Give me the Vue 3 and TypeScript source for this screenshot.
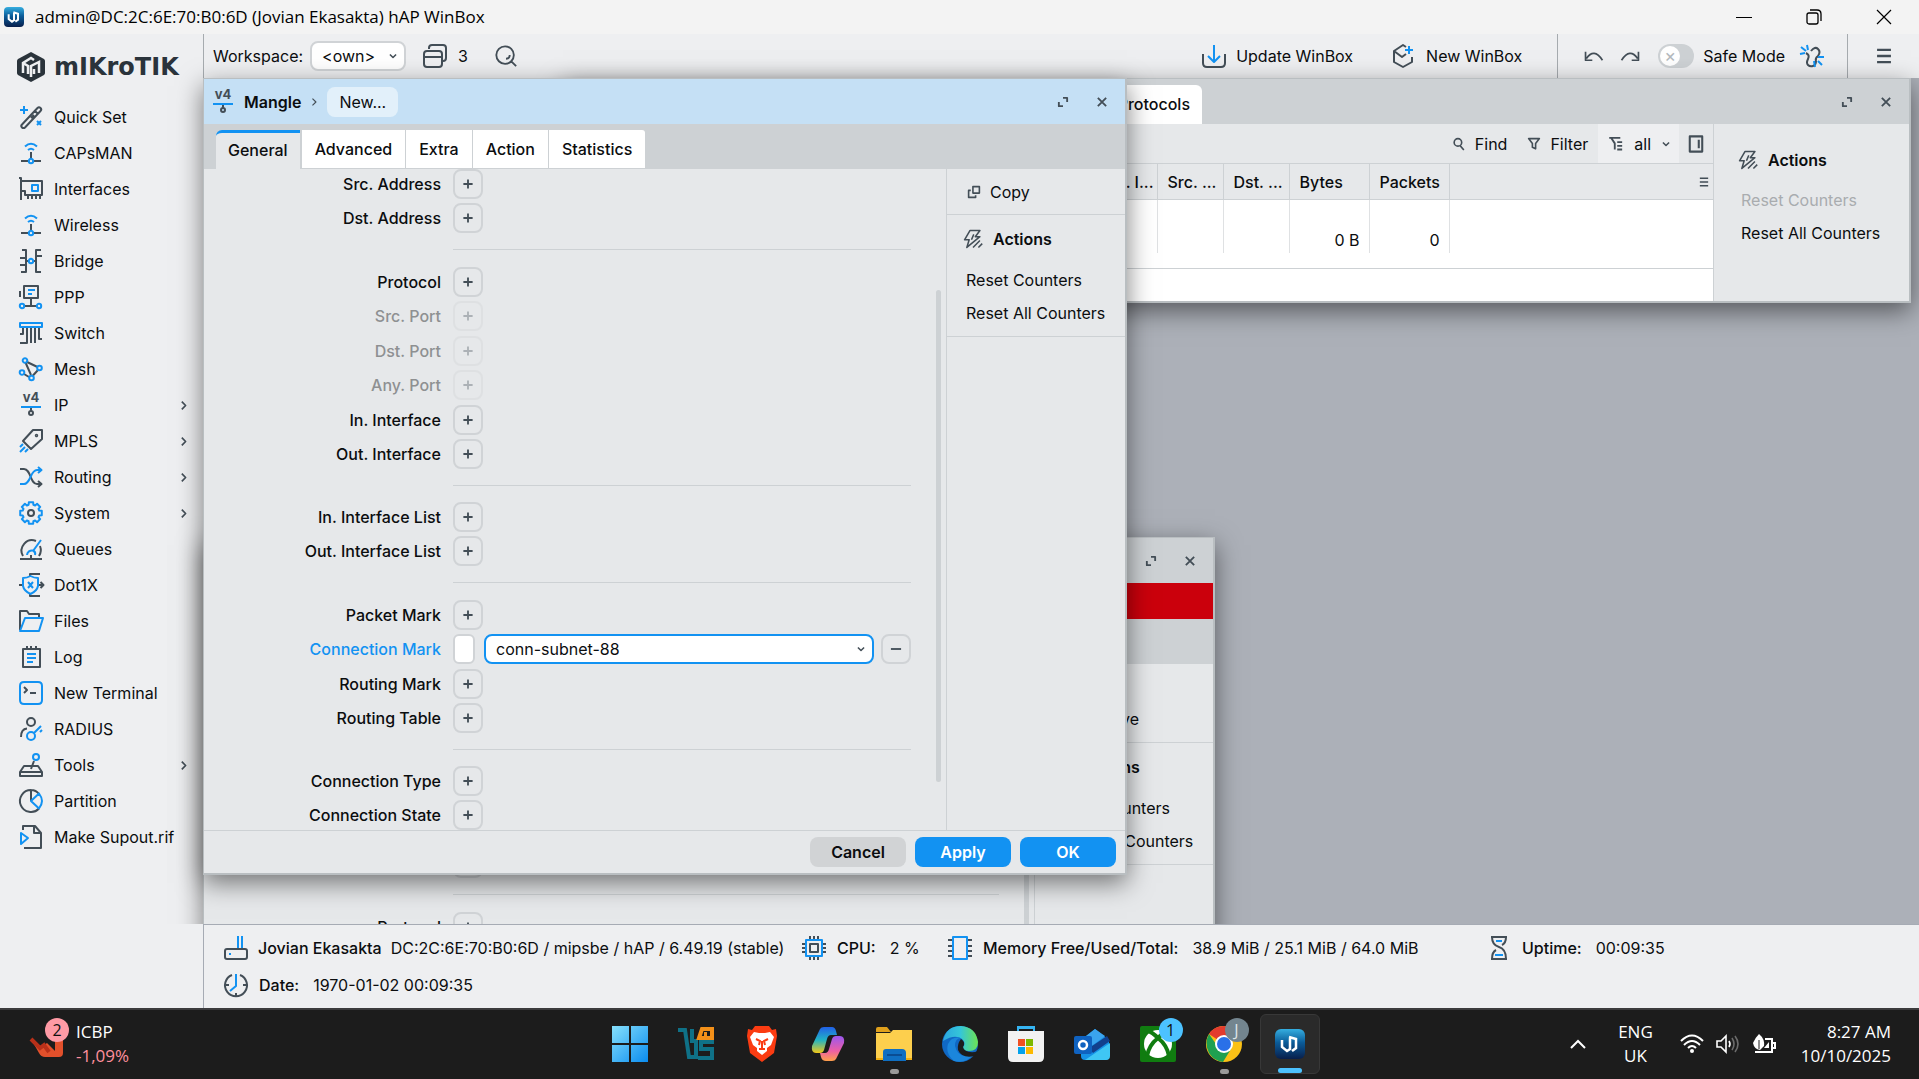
<script setup lang="ts">
import { h, ref } from 'vue'

type Stroke = [tone: 'k' | 'b', d: string]

const circle = (x: number, y: number, r: number): string =>
  `M${x - r} ${y}a${r} ${r} 0 1 0 ${2 * r} 0a${r} ${r} 0 1 0 ${-2 * r} 0`

const gear = (): string => {
  const points: string[] = []
  for (let i = 0; i < 8; i++) {
    const base = (i * Math.PI) / 4
    for (const [offset, radius] of [[-0.28, 8.6], [-0.2, 11], [0.2, 11], [0.28, 8.6]]) {
      const x = 12 + radius * Math.sin(base + offset)
      const y = 12 - radius * Math.cos(base + offset)
      points.push(`${x.toFixed(2)} ${y.toFixed(2)}`)
    }
  }
  return `M${points.join('L')}Z`
}

const strokes: Record<string, Stroke[]> = {
  quick: [
    ['b', 'M5 1v8M1 5h8M4 4l2 2M6 4l-2 2M18 16l4 4M22 16l-4 4'],
    ['k', 'M3 19.500L18.500 3a2 2 0 0 1 3 3L6 22.500a2 2 0 0 1-3-3zM16 6l3 3M15 10l-3 3'],
  ],
  wifi: [
    ['b', 'M6 5.500Q12 0 18 5.500M9 9Q12 6.500 15 9'],
    ['k', 'M12 11v6M2 20h7.500M14.500 20H22'],
    ['b', circle(12, 20, 2.2)],
  ],
  interfaces: [
    ['k', 'M0 1h2v22M2 4h21v14h-2M2 14h4v4h3M9 17v5M13 17v5M17 17v5M21 17v5M9 18h12'],
    ['b', 'M13 8h6v6h-6z'],
  ],
  bridge: [
    ['k', 'M3 1h4v22H2M1 9h6M1 16h6M22 1h-5v22h5M23 7h-6M7 12h2.500M14.500 12H17'],
    ['b', circle(12, 12, 2.2)],
  ],
  ppp: [
    ['k', 'M1 6v6M5 1h14v12H5zM12 13v7M6 21h12'],
    ['b', 'M9 5h7M9 9h4' + circle(3, 21, 2.2) + circle(20, 21, 2.2)],
  ],
  switch: [
    ['b', 'M1 2h22v4H1z'],
    ['k', 'M4 7v6H1M8 7v15H1M12 7v15M16 7v15M20 7v11h3'],
  ],
  mesh: [
    ['k', 'M7 4.500L18.500 10M19 13l-5.500 6M12 18L6.500 5.500M5 17l5 3'],
    ['b', circle(6, 3.5, 2.3) + circle(20.5, 11, 2.3) + circle(3, 15.5, 2.3) + circle(12.5, 21, 2.3)],
  ],
  ip: [
    ['b', 'M2 14h20'],
    ['k', 'M12 15v3' + circle(12, 20, 2)],
  ],
  mpls: [
    ['k', 'M4 12L14 1h9v9L12 20z' + circle(17.5, 6.5, 0.7)],
    ['b', 'M4 15l-3 3M6 18l-5 5M9 20l-3 3'],
  ],
  routing: [
    ['k', 'M1 4h4c7 0 6 15 13 15h4M19 16l3.500 3-3.500 3'],
    ['b', 'M1 19h4c7 0 6-14 13-14h4M19 2l3.500 3L19 8'],
  ],
  system: [['b', gear()], ['k', circle(12, 12, 3)]],
  queues: [
    ['k', 'M4 19A10.500 10.500 0 0 1 17 4M21 9a11 11 0 0 1-1 10M1 22h22M12 18v4'],
    ['b', 'M22 3l-8 11M8 18a5 5 0 0 1 6-4.500Q17 15 16 18'],
  ],
  dot1x: [
    ['k', 'M11 3V1h10M11 21v2h10M0 12h4M20 12h4M21.500 9l3 3-3 3'],
    ['b', 'M4 5Q8 5 11.500 3Q15 5 19 5v8q-1 5-7.500 8Q5 18 4 13zM9 9l5 6M14 9l-5 6'],
  ],
  files: [
    ['k', 'M1 21V2h7l2 3h10v4'],
    ['b', 'M1 22L6 9h18l-4 13z'],
  ],
  log: [
    ['k', 'M4 4h17v18H4zM8 1v4M12 1v4M17 1v4'],
    ['b', 'M8 9h9M8 13h9M8 17h6'],
  ],
  terminal: [
    ['b', 'M5 1h14q4 0 4 4v14q0 4-4 4H5q-4 0-4-4V5q0-4 4-4z'],
    ['k', 'M5 6l3 3-3 3M11 12h6'],
  ],
  radius: [
    ['k', circle(12, 5, 4) + 'M2 20q0-8 6-8.500'],
    ['b', circle(12, 19, 4) + 'M15 16l7-7M21 15l2-2'],
  ],
  tools: [
    ['k', 'M1 19L5 13h14l4 6v4H1zM1 19h22M12 16l3-8'],
    ['b', circle(17, 4, 3)],
  ],
  partition: [
    ['k', 'M20 19.500A11 11 0 1 1 12 1v11M12 1q5 0 8 4'],
    ['b', 'M20 4.500q3 4 3 7.500t-3 7.500L12 12zM12 12l8-7.500'],
  ],
  supout: [
    ['k', 'M4 5V1h12l6 7v15H5M15 1v7h7'],
    ['b', 'M2 8l7 5-7 6z'],
  ],
  windows: [
    ['k', 'M6 5V4q0-3 3-3h11q3 0 3 3v10q0 3-3 3h-1M4 7h12q3 0 3 3v10q0 3-3 3H4q-3 0-3-3V10q0-3 3-3zM1 13h18'],
  ],
  search: [['k', circle(11, 11, 9.5) + 'M18 18l5 5M16 11q0 4-4 4']],
  update: [
    ['k', 'M1 10v9q0 4 4 4h14q4 0 4-4v-9'],
    ['b', 'M12 1v17M6 12l6 6 6-6'],
  ],
  newbox: [
    ['k', 'M14 3l-3-2-9 6v11l9 5 9-5v-5M2 7l8 6 4-3'],
    ['b', 'M17 2v8M13 6h8M16 5l2 2M18 5l-2 2'],
  ],
  undo: [['k', 'M2 7v10h8M3 15Q12 2 22 17']],
  redo: [['k', 'M22 7v10h-8M21 15Q12 2 2 17']],
  unlink: [
    ['k', 'M11 7q4-5 7-2t0 7q-3 2-2 5M6 9q4 2 2 6-2 4 0 6t5 1q3-1 3-5'],
    ['b', 'M7 1l1 5M1 3l5 4M0 10l5-1M14 17l1 6M18 17l4 4M18 13h6'],
  ],
  menu: [['k', 'M3 4h18M3 12h18M3 20h18']],
  expand: [['k', 'M12 3h9v9M12 21H3v-9']],
  close: [['k', 'M3 3l18 18M21 3L3 21']],
  copy: [['k', 'M10 2h12v12H10zM6 9H2v13h13v-4']],
  actions: [['k', 'M8 1h13l-6 8h6L4 23l3-10H1zM21 14l-9 9M24 18l-5 5M13 6l-3 7']],
  find: [['k', circle(10, 9, 7) + 'M14 15l7 8']],
  filter: [['k', 'M2 2h20l-7 9v10l-6-3v-7z']],
  tree: [['k', 'M1 2h18M4 2l6 9v10M14 9h8M14 15h8M14 21h8']],
  panel: [['k', 'M3 1h18v22H3zM16 6v12']],
  down: [['k', 'M4 8l8 8 8-8']],
  right: [['k', 'M8 3l9 9-9 9']],
  plus: [['k', 'M12 2v20M2 12h20']],
  minus: [['k', 'M1 12h22']],
  router: [
    ['k', 'M3 13h18q2 0 2 2v6q0 2-2 2H3q-2 0-2-2v-6q0-2 2-2z'],
    ['b', 'M14 0v12M18 0v12M6 17v2'],
  ],
  cpu: [
    ['k', 'M8 0v3M12 0v3M16 0v3M8 21v3M12 21v3M16 21v3M0 8h3M0 12h3M0 16h3M21 8h3M21 12h3M21 16h3M8 8h8v8H8z'],
    ['b', 'M4 4h16v16H4z'],
  ],
  memory: [
    ['k', 'M0 4h5M0 10h5M0 15h5M0 20h5M19 4h5M19 10h5M19 15h5M19 20h5'],
    ['b', 'M5 1h14v22H5z'],
  ],
  hourglass: [
    ['k', 'M4 1h16M4 23h16M5 1q0 8 7 10t7 12M19 1q0 6-4 8M5 23q0-7 4-9'],
    ['b', 'M9 5h6M8 19h8'],
  ],
  clock: [
    ['k', 'M8 2A11 11 0 1 0 16 2M12 20v3M2 12h3M19 12h3'],
    ['b', 'M12 1v12l-6 5'],
  ],
}

const Icon = (props: { name: string; size?: number; weight?: number }) => {
  const size = props.size ?? 24
  const children: any[] = (strokes[props.name] ?? []).map(([tone, d]) =>
    h('path', { d, stroke: tone === 'b' ? '#1292f2' : '#434e57' }),
  )
  if (props.name === 'ip') {
    children.push(
      h('text', { x: 12, y: 9, 'text-anchor': 'middle', 'font-size': 13, 'font-weight': 700, fill: '#434e57', 'font-family': 'Inter, sans-serif' }, 'v4'),
    )
  }
  return h(
    'svg',
    { width: size, height: size, viewBox: '-1 -1 26 26', overflow: 'visible', fill: 'none', 'stroke-width': props.weight ?? 2, 'stroke-linejoin': 'round', 'aria-hidden': 'true' },
    children,
  )
}
Icon.props = ['name', 'size', 'weight']

const menu: { label: string; icon: string; more?: boolean }[] = [
  { label: 'Quick Set', icon: 'quick' },
  { label: 'CAPsMAN', icon: 'wifi' },
  { label: 'Interfaces', icon: 'interfaces' },
  { label: 'Wireless', icon: 'wifi' },
  { label: 'Bridge', icon: 'bridge' },
  { label: 'PPP', icon: 'ppp' },
  { label: 'Switch', icon: 'switch' },
  { label: 'Mesh', icon: 'mesh' },
  { label: 'IP', icon: 'ip', more: true },
  { label: 'MPLS', icon: 'mpls', more: true },
  { label: 'Routing', icon: 'routing', more: true },
  { label: 'System', icon: 'system', more: true },
  { label: 'Queues', icon: 'queues' },
  { label: 'Dot1X', icon: 'dot1x' },
  { label: 'Files', icon: 'files' },
  { label: 'Log', icon: 'log' },
  { label: 'New Terminal', icon: 'terminal' },
  { label: 'RADIUS', icon: 'radius' },
  { label: 'Tools', icon: 'tools', more: true },
  { label: 'Partition', icon: 'partition' },
  { label: 'Make Supout.rif', icon: 'supout' },
]

interface Field { label: string; off?: boolean; edit?: boolean }

const groups: Field[][] = [
  [{ label: 'Src. Address' }, { label: 'Dst. Address' }],
  [
    { label: 'Protocol' },
    { label: 'Src. Port', off: true },
    { label: 'Dst. Port', off: true },
    { label: 'Any. Port', off: true },
    { label: 'In. Interface' },
    { label: 'Out. Interface' },
  ],
  [{ label: 'In. Interface List' }, { label: 'Out. Interface List' }],
  [{ label: 'Packet Mark' }, { label: 'Connection Mark', edit: true }, { label: 'Routing Mark' }, { label: 'Routing Table' }],
  [{ label: 'Connection Type' }, { label: 'Connection State' }],
]
const rearGroups: Field[][] = [[{ label: 'Dst. Address' }], [{ label: 'Protocol' }]]

const tabs = ['General', 'Advanced', 'Extra', 'Action', 'Statistics']
const activeTab = ref('General')
const connectionMark = ref('conn-subnet-88')
const invert = ref(false)
const safeMode = ref(false)
const fieldId = (label: string) => label.toLowerCase().replace(/[^a-z]+/g, '-')
</script>

<template>
  <div class="screen">
    <header class="titlebar">
      <svg width="20" height="20" viewBox="0 0 30 30" aria-hidden="true">
        <defs>
          <linearGradient id="wb" x1="0" y1="0" x2="0" y2="1"><stop offset="0" stop-color="#35aee0" /><stop offset=".45" stop-color="#0b5c99" /><stop offset="1" stop-color="#081f4c" /></linearGradient>
        </defs>
        <rect width="30" height="30" rx="6" fill="url(#wb)" />
        <path d="M7 11v7l5 4 3-2V9M14 8l7 2v9l-4 3" fill="none" stroke="#fff" stroke-width="3" />
      </svg>
      <h1>admin@DC:2C:6E:70:B0:6D (Jovian Ekasakta) hAP WinBox</h1>
      <div class="syskeys">
        <button aria-label="Minimize"><svg width="16" height="16" viewBox="0 0 16 16"><path d="M0 8.500h16" stroke="#000" /></svg></button>
        <button aria-label="Restore"><svg width="16" height="16" viewBox="0 0 16 16" fill="none" stroke="#000" stroke-width="1.300"><rect x="1" y="4" width="11" height="11" rx="2" /><path d="M4 1h7q4 0 4 4v7" /></svg></button>
        <button aria-label="Close"><svg width="16" height="16" viewBox="0 0 16 16" stroke="#000" stroke-width="1.200"><path d="M1 1l14 14M15 1L1 15" /></svg></button>
      </div>
    </header>

    <div class="main">
      <nav class="sidebar">
        <div class="brand">
          <svg width="28" height="30" viewBox="0 0 28 30" aria-hidden="true">
            <path d="M14 0l13 7q1 1 1 2v12q0 1-1 2L14 30 1 23q-1-1-1-2V9q0-1 1-2z" fill="#2a333b" />
            <path d="M6 21V11l8-5 3 2M6 11l5 3v8M14 25V14l8-4v11M17 22v-5" fill="none" stroke="#eeeff1" stroke-width="2.500" />
          </svg>
          <span>mIKroTIK</span>
        </div>
        <a v-for="item in menu" :key="item.label" href="#" class="item">
          <Icon :name="item.icon" :size="26" />
          <span>{{ item.label }}</span>
          <Icon v-if="item.more" name="right" :size="11" :weight="4" class="more" />
        </a>
      </nav>

      <div class="work">
        <div class="toolbar">
          <label for="workspace">Workspace:</label>
          <div class="pick small">
            <select id="workspace"><option>&lt;own&gt;</option></select>
            <Icon name="down" :size="10" :weight="4" />
          </div>
          <button class="count"><Icon name="windows" :size="26" /><span>3</span></button>
          <button aria-label="Search"><Icon name="search" :size="24" /></button>
          <div class="tools">
            <button class="tool"><Icon name="update" :size="26" /><span>Update WinBox</span></button>
            <button class="tool second"><Icon name="newbox" :size="26" /><span>New WinBox</span></button>
            <div class="cluster">
              <button aria-label="Undo"><Icon name="undo" :size="22" /></button>
              <button aria-label="Redo"><Icon name="redo" :size="22" /></button>
              <label class="safe"><input v-model="safeMode" type="checkbox"><span class="track"><i>×</i></span>Safe Mode</label>
              <button aria-label="Disconnect"><Icon name="unlink" :size="26" /></button>
            </div>
            <button class="burger" aria-label="Menu"><Icon name="menu" :size="20" :weight="3" /></button>
          </div>
        </div>

        <div class="desktop">
          <section class="window firewall">
            <div class="bar gray">
              <span class="doc-tab">Layer7 Protocols</span>
              <button aria-label="Maximize" class="key"><Icon name="expand" :size="12" :weight="4" /></button>
              <button aria-label="Close" class="key"><Icon name="close" :size="12" :weight="4" /></button>
            </div>
            <div class="panes">
              <div class="listing">
                <div class="listbar">
                  <button><Icon name="find" :size="14" :weight="3" />Find</button>
                  <button><Icon name="filter" :size="14" :weight="3" />Filter</button>
                  <button class="lit"><Icon name="tree" :size="16" :weight="3" />all<Icon name="down" :size="10" :weight="4" /></button>
                  <button aria-label="Toggle panel"><Icon name="panel" :size="18" :weight="3" /></button>
                </div>
                <table>
                  <colgroup><col class="c-out"><col class="c-src"><col class="c-dst"><col class="c-bytes"><col class="c-packets"><col></colgroup>
                  <thead><tr><th class="end">Out. I...</th><th>Src. ...</th><th>Dst. ...</th><th>Bytes</th><th>Packets</th><th class="end"><Icon name="menu" :size="12" :weight="3" /></th></tr></thead>
                  <tbody><tr><td></td><td></td><td></td><td>0 B</td><td>0</td><td></td></tr></tbody>
                </table>
                <div class="foot"></div>
              </div>
              <aside class="side wide">
                <h2><Icon name="actions" :size="20" />Actions</h2>
                <button disabled>Reset Counters</button>
                <button>Reset All Counters</button>
              </aside>
            </div>
          </section>

          <section class="window rear">
            <div class="bar gray">
              <button aria-label="Maximize" class="key push"><Icon name="expand" :size="12" :weight="4" /></button>
              <button aria-label="Close" class="key"><Icon name="close" :size="12" :weight="4" /></button>
            </div>
            <div class="alert"></div>
            <div class="tabs"></div>
            <div class="panes">
              <div class="form offset">
                <div v-for="(group, g) in rearGroups" :key="g" class="group">
                  <div v-for="field in group" :key="field.label" class="row">
                    <label :for="'rear-' + fieldId(field.label)">{{ field.label }}</label>
                    <button :id="'rear-' + fieldId(field.label)" class="square"><Icon name="plus" :size="12" :weight="4" /></button>
                  </div>
                </div>
                <i class="thumb rear-thumb"></i>
              </div>
              <aside class="side">
                <button class="line remove">Remove</button>
                <div class="block">
                  <h2><Icon name="actions" :size="20" />Actions</h2>
                  <button>Reset Counters</button>
                  <button>Reset All Counters</button>
                </div>
              </aside>
            </div>
          </section>

          <section class="window front">
            <div class="bar blue">
              <Icon name="ip" :size="26" />
              <strong>Mangle</strong>
              <Icon name="right" :size="10" :weight="3" />
              <span class="crumb">New...</span>
              <button aria-label="Maximize" class="key push"><Icon name="expand" :size="12" :weight="4" /></button>
              <button aria-label="Close" class="key"><Icon name="close" :size="12" :weight="4" /></button>
            </div>
            <div class="tabs">
              <button v-for="tab in tabs" :key="tab" :class="{ on: tab === activeTab }" @click="activeTab = tab">{{ tab }}</button>
            </div>
            <div class="panes">
              <div class="form">
                <div v-for="(group, g) in groups" :key="g" class="group">
                  <div v-for="field in group" :key="field.label" class="row" :class="{ off: field.off, edit: field.edit }">
                    <label :for="fieldId(field.label)">{{ field.label }}</label>
                    <template v-if="field.edit">
                      <input v-model="invert" type="checkbox" aria-label="Invert match">
                      <div class="pick">
                        <select :id="fieldId(field.label)" v-model="connectionMark"><option>conn-subnet-88</option></select>
                        <Icon name="down" :size="10" :weight="4" />
                      </div>
                      <button class="square" aria-label="Clear"><Icon name="minus" :size="12" :weight="4" /></button>
                    </template>
                    <button v-else :id="fieldId(field.label)" class="square" :disabled="field.off"><Icon name="plus" :size="12" :weight="4" /></button>
                  </div>
                </div>
                <i class="thumb"></i>
              </div>
              <aside class="side">
                <button class="line"><Icon name="copy" :size="14" :weight="3" />Copy</button>
                <div class="block">
                  <h2><Icon name="actions" :size="20" />Actions</h2>
                  <button>Reset Counters</button>
                  <button>Reset All Counters</button>
                </div>
              </aside>
            </div>
            <footer>
              <button>Cancel</button>
              <button class="go">Apply</button>
              <button class="go">OK</button>
            </footer>
          </section>
        </div>

        <div class="status">
          <div class="stats">
            <p class="s-name"><Icon name="router" :size="26" /><b>Jovian Ekasakta</b><span>DC:2C:6E:70:B0:6D / mipsbe / hAP / 6.49.19 (stable)</span></p>
            <p class="s-cpu"><Icon name="cpu" :size="26" /><b>CPU:</b><span>2 %</span></p>
            <p class="s-mem"><Icon name="memory" :size="26" /><b>Memory Free/Used/Total:</b><span>38.9 MiB / 25.1 MiB / 64.0 MiB</span></p>
            <p class="s-up"><Icon name="hourglass" :size="26" /><b>Uptime:</b><span>00:09:35</span></p>
          </div>
          <div class="stats"><p class="s-date"><Icon name="clock" :size="26" /><b>Date:</b><span>1970-01-02 00:09:35</span></p></div>
        </div>
      </div>
    </div>

    <footer class="taskbar">
      <a href="#" class="widget">
        <span class="stock">
          <svg width="38" height="30" viewBox="0 0 38 30" aria-hidden="true"><path d="M2 10l9 9 7-5 8 8V12l8-6v18q0 4-4 4H16q-4 0-6-4z" fill="#e2502b" /><path d="M2 10l9 9 4-3 5 7" fill="none" stroke="#b93019" stroke-width="4" /></svg>
          <b class="badge pink">2</b>
        </span>
        <span class="quote"><span>ICBP</span><em>-1,09%</em></span>
      </a>

      <div class="apps">
        <button aria-label="Start">
          <svg width="36" height="36" viewBox="0 0 36 36"><defs><linearGradient id="win" x1="0" y1="0" x2="1" y2="1"><stop offset="0" stop-color="#86e0fb" /><stop offset="1" stop-color="#0a8cf0" /></linearGradient></defs><path d="M0 0h17v17H0zM19 0h17v17H19zM0 19h17v17H0zM19 19h17v17H19z" fill="url(#win)" /></svg>
        </button>
        <button aria-label="Virtual machines">
          <svg width="36" height="36" viewBox="0 0 36 36" fill="none" stroke="#0f7187" stroke-width="4"><path d="M0 4h7l4 27h7V15h-4V3" /><path d="M36 16H23v7h11v9H20" /><path d="M21 12l3-9h10v9zM26 8h3" stroke="#f39019" /></svg>
        </button>
        <button aria-label="Brave">
          <svg width="30" height="36" viewBox="0 0 30 36"><path d="M8 0h14l3 4 4-1 1 7-3 17-12 9-12-9L0 10l1-7 4 1z" fill="#fb3c12" /><path d="M7 6l5 1h6l5-1 4 5-3 8-4 3v3l-5 4-5-4v-3l-4-3-3-8z" fill="#fff" /><path d="M9 13l4 2-1 4M21 13l-4 2 1 4M12 23h6M15 15v8" stroke="#fb3c12" stroke-width="2" fill="none" /></svg>
        </button>
        <button aria-label="Copilot">
          <svg width="34" height="34" viewBox="0 0 34 34"><defs><linearGradient id="cp1" x1="0" y1="0" x2="0" y2="1"><stop offset="0" stop-color="#2160e8" /><stop offset=".5" stop-color="#22b4c4" /><stop offset="1" stop-color="#f2c818" /></linearGradient><linearGradient id="cp2" x1="0" y1="0" x2="0" y2="1"><stop offset="0" stop-color="#9a57f0" /><stop offset=".6" stop-color="#ee5fa4" /><stop offset="1" stop-color="#ffa04a" /></linearGradient></defs><path d="M9 2q1-2 4-2h8q3 0 4 4l1 4h-6q-3 0-4 4l-3 11q-1 3-4 3H5q-5 0-4-7z" fill="url(#cp1)" /><path d="M25 32q-1 2-4 2h-6q-4 0-5-4l-1-4h5q3 0 4-4l3-10q1-3 4-3h4q5 0 4 7z" fill="url(#cp2)" /></svg>
        </button>
        <button aria-label="File Explorer" class="run">
          <svg width="36" height="34" viewBox="0 0 36 34"><path d="M0 2q0-2 2-2h9l4 5H0z" fill="#e0a01c" /><path d="M0 6h14l3-3h19v30H0z" fill="#fdcf4d" /><path d="M0 31h36v2H0z" fill="#f2b010" /><path d="M7 34V25q0-3 3-3h16q4 0 4 4v8z" fill="#0f6fc2" /><path d="M11 28h15" stroke="#0a4d93" stroke-width="2" /></svg>
        </button>
        <button aria-label="Edge">
          <svg width="36" height="36" viewBox="0 0 36 36"><defs><linearGradient id="ed" x1="0" y1="0" x2="1" y2="0"><stop offset="0" stop-color="#2aa6e0" /><stop offset=".5" stop-color="#35c6d8" /><stop offset="1" stop-color="#6de352" /></linearGradient></defs><circle cx="18" cy="18" r="18" fill="#1068c4" /><path d="M1 15Q4 0 19 0q15 1 17 16 0 9-9 9-6 0-6-4 3-3 0-7-7-7-20 1z" fill="url(#ed)" /><path d="M13 20q0-8 6-8-9-2-13 6-3 9 6 17 12 3 20-7-16 6-19-8z" fill="#1b86dc" /><path d="M19 13q5 3 2 8 1 6 12 5l3-1-3 5q-13 3-17-6-1-6 3-11z" fill="#1c1c1c" /></svg>
        </button>
        <button aria-label="Store">
          <svg width="36" height="36" viewBox="0 0 36 36"><path d="M10 7V1h16v6" fill="none" stroke="#35b4f2" stroke-width="2" /><path d="M0 5h36v26q0 5-5 5H5q-5 0-5-5z" fill="#f2f2f2" /><path d="M10 5V2h16v3" fill="none" stroke="#35b4f2" stroke-width="2" /><path d="M10 13h7v7h-7z" fill="#f05023" /><path d="M18 13h7v7h-7z" fill="#7db900" /><path d="M10 21h7v7h-7z" fill="#02a2ec" /><path d="M18 21h7v7h-7z" fill="#fcb900" /></svg>
        </button>
        <button aria-label="Outlook">
          <svg width="36" height="32" viewBox="0 0 36 32"><path d="M7 12L21 1l14 11v16q0 4-4 4H11q-4 0-4-4z" fill="#1591e6" /><path d="M7 12L21 1l10 7-16 12z" fill="#3aa4ee" /><path d="M15 20L33 8l3 5-17 12z" fill="#123f8c" /><path d="M11 32l25-17v13q0 4-4 4z" fill="#3fc6f4" /><rect y="8" width="18" height="18" rx="2" fill="#0f62c0" /><circle cx="9" cy="17" r="4" fill="none" stroke="#fff" stroke-width="2.500" /></svg>
        </button>
        <button aria-label="Xbox">
          <svg width="36" height="36" viewBox="0 0 36 36"><rect width="36" height="36" rx="2" fill="#107c10" /><circle cx="18" cy="18" r="14" fill="#fff" /><path d="M8 5q4 1 10 7 6-6 10-7M18 12Q9 19 7 30M18 12q9 7 11 18" stroke="#107c10" stroke-width="4" fill="none" /></svg>
          <b class="badge sky">1</b>
        </button>
        <button aria-label="Chrome" class="run">
          <svg width="36" height="36" viewBox="0 0 36 36"><circle cx="18" cy="18" r="18" fill="#fbc116" /><path d="M18 18L3 8Q8 0 18 0q12 0 16 10H18z" fill="#e33b2e" /><path d="M18 18l-6 3L3 8q-5 9 0 19 5 8 14 9l8-13z" fill="#1fa050" /><circle cx="18" cy="18" r="9" fill="#fff" /><circle cx="18" cy="18" r="7" fill="#2a70e8" /></svg>
          <b class="badge slate">J</b>
        </button>
        <button aria-label="WinBox" class="live">
          <svg width="30" height="30" viewBox="0 0 30 30"><rect width="30" height="30" rx="6" fill="url(#wb)" /><path d="M7 11v7l5 4 3-2V9M14 8l7 2v9l-4 3" fill="none" stroke="#fff" stroke-width="2.500" /></svg>
        </button>
      </div>

      <div class="tray">
        <button aria-label="Show hidden icons"><svg width="16" height="10" viewBox="0 0 16 10" fill="none" stroke="#fff" stroke-width="2"><path d="M1 9l7-7 7 7" /></svg></button>
        <span class="lang">ENG<br>UK</span>
        <span class="signals">
          <svg width="24" height="20" viewBox="0 0 24 20" fill="none" stroke="#fff" stroke-width="2"><path d="M1 7q11-11 22 0M4 11q8-8 16 0M8 14q4-4 8 0" /><circle cx="12" cy="17" r="2" fill="#fff" stroke="none" /></svg>
          <svg width="24" height="20" viewBox="0 0 24 20" fill="none" stroke="#fff" stroke-width="1.600"><path d="M1 7h4l5-5v16l-5-5H1zM13 7q2 3 0 6" /><path d="M16 4q4 6 0 12M19 2q6 8 0 16" stroke="#6c6c6c" /></svg>
          <svg width="24" height="20" viewBox="0 0 24 20" fill="none" stroke="#fff" stroke-width="2"><path d="M13 5h7v13H3M21 9h2v5h-2" /><path d="M7 0q6 5 5 12l-4 4q-6-1-7-7 2-5 6-9z" fill="#fff" stroke="none" /><path d="M12 14l5-6v6z" fill="#fff" stroke="none" /><path d="M7 6v9" stroke="#1c1c1c" stroke-width="1" /></svg>
        </span>
        <span class="time">8:27 AM<br>10/10/2025</span>
      </div>
    </footer>
  </div>
</template>

<style>
body { margin: 0; }
</style>

<style scoped>
.screen { display: flex; flex-direction: column; height: 100vh; overflow: hidden; font: 400 16px/20px Inter, "Liberation Sans", sans-serif; color: #0b0d0f; background: #eeeff1; }
.screen * { box-sizing: border-box; }
button { display: flex; align-items: center; padding: 0; border: 0; background: none; font: inherit; color: inherit; }
svg { flex: none; display: block; }
h1, h2, p { margin: 0; font: inherit; }
select { appearance: none; font: inherit; color: inherit; }
input { margin: 0; }

.titlebar { display: flex; align-items: center; gap: 11px; height: 34px; flex: none; padding-left: 4px; background: #f3f3f3; color: #000; font-family: "Open Sans", "Noto Sans", sans-serif; }
.titlebar h1 { font-size: 17px; }
.syskeys { display: flex; margin-left: auto; }
.syskeys button { width: 70px; height: 34px; justify-content: center; }

.main { display: flex; flex: 1; min-height: 0; }
.sidebar { width: 203px; flex: none; display: flex; flex-direction: column; background: #eeeff1; }
.brand { display: flex; align-items: center; gap: 9px; height: 65px; flex: none; padding-left: 17px; font: 700 24px/30px "DejaVu Sans", sans-serif; color: #2a333b; }
.item { display: flex; align-items: center; gap: 10px; height: 36px; padding: 0 14px 0 18px; color: inherit; text-decoration: none; }
.more { margin-left: auto; }

.work { flex: 1; min-width: 0; display: flex; flex-direction: column; }
.toolbar { display: flex; align-items: center; height: 44px; flex: none; padding-left: 9px; border-left: 1px solid #a6abaf; background: #eeeff1; }
.pick { position: relative; flex: 1; display: flex; }
.pick select { flex: 1; height: 30px; padding: 0 24px 0 10px; border: 2px solid #1292f2; border-radius: 8px; background: #fff; }
.pick svg { position: absolute; right: 8px; top: 10px; pointer-events: none; }
.pick.small { flex: none; width: 96px; margin: 0 16px 0 7px; }
.pick.small select { border-color: #d0d3d6; }
.count { gap: 10px; margin-right: 26px; }
.tools { display: flex; align-items: center; align-self: stretch; margin-left: auto; }
.tool { gap: 9px; }
.second { margin: 0 35px 0 38px; }
.cluster { display: flex; align-items: center; align-self: stretch; gap: 14px; padding: 0 22px 0 25px; border: solid #a6abaf; border-width: 0 1px; }
.safe { display: flex; align-items: center; gap: 9px; margin-left: 3px; }
.safe input { position: absolute; opacity: 0; width: 36px; height: 24px; }
.track { width: 36px; height: 24px; border-radius: 12px; background: #cdd1d4; padding: 2px; }
.track i { display: block; width: 20px; height: 20px; border-radius: 10px; background: #fff; color: #b4b9bd; text-align: center; font-style: normal; font-size: 18px; }
.burger { width: 71px; justify-content: center; }

.desktop { position: relative; z-index: 1; flex: 1; min-height: 0; background: #acb0b8; clip-path: inset(-30px 0 0 -50px); }
.window { position: absolute; display: flex; flex-direction: column; border: 1px solid #b9bec1; border-right-width: 2px; border-bottom-width: 2px; background: #e6e8ea; box-shadow: 0 8px 24px rgba(0, 0, 0, .5); }
.front { left: 0; top: 0; width: 924px; height: 797px; }
.rear { left: 0; top: 459px; width: 1012px; height: 500px; }
.firewall { left: 360px; right: 8px; top: 0; height: 225px; }

.bar { display: flex; align-items: center; gap: 8px; height: 45px; flex: none; padding-right: 8px; }
.blue { background: #c5e0f5; padding-left: 6px; }
.gray { background: #cdd1d4; }
.bar strong { font-weight: 600; }
.crumb { padding: 5px 12px; border-radius: 8px; background: #e2f0fa; }
.key { width: 31px; height: 31px; justify-content: center; }
.push { margin-left: auto; }
.doc-tab { align-self: flex-end; width: 258px; height: 39px; margin: 0 auto 0 380px; padding: 9px 12px; border-radius: 6px 6px 0 0; background: #fff; text-align: right; font-weight: 500; }

.tabs { display: flex; align-items: flex-end; gap: 1px; height: 45px; flex: none; padding-left: 12px; background: #cdd1d4; }
.tabs button { height: 38px; margin-bottom: 1px; padding: 0 13px; background: #fff; font-weight: 500; }
.tabs .on { height: 39px; margin: 0 1px 0 0; padding: 0 12px 2px; background: #e6e8ea; border-top: 3px solid #1292f2; border-top-left-radius: 6px; }
.tabs button:last-child { border-top-right-radius: 3px; }
.alert { height: 36px; flex: none; background: #cb000c; }

.panes { display: flex; flex: 1; min-height: 0; }
.form { position: relative; flex: 1; min-width: 0; overflow: hidden; padding-right: 35px; }
.offset { padding-top: 184px; }
.group + .group::before { content: ""; display: block; height: 1px; margin: 16px 0 16px 249px; background: #cdd1d4; }
.group:nth-child(even)::before { margin-bottom: 17px; }
.row { display: flex; align-items: center; height: 30px; }
.row + .row { margin-top: 5px; }
.row:nth-child(even) { margin-top: 4px; }
.row label { width: 237px; margin-right: 12px; text-align: right; font-weight: 500; }
.off label { color: #8e9092; }
.off .square { opacity: .35; }
.edit label { color: #1292f2; }
.square { width: 30px; height: 30px; flex: none; justify-content: center; border: 2px solid #d0d3d6; border-radius: 8px; }
.edit input { appearance: none; width: 22px; height: 30px; margin-right: 9px; border: 2px solid #d0d3d6; border-radius: 6px; background: #fff; }
.edit .square { margin-left: 7px; }
.thumb { position: absolute; right: 5px; top: 121px; bottom: 48px; width: 5px; border-radius: 3px; background: #cdd1d4; }
.rear-thumb { top: 0; bottom: 0; }

.side { width: 179px; flex: none; border-left: 1px solid #cdd1d4; display: flex; flex-direction: column; }
.side button { height: 33px; padding-left: 19px; }
.side .line { height: 46px; padding-left: 20px; gap: 9px; border-bottom: 1px solid #cdd1d4; }
.side .remove { height: 79px; padding: 32px 74px 0 0; justify-content: flex-end; }
.side h2 { display: flex; align-items: center; gap: 10px; height: 48px; padding-left: 16px; font-weight: 600; }
.side .block { padding-bottom: 7px; border-bottom: 1px solid #cdd1d4; }
.wide { width: 196px; padding-top: 12px; }
.wide h2 { padding-left: 24px; height: 47px; }
.wide button { padding-left: 27px; }
.side button:disabled { color: #a9acaf; }

.listing { flex: 1; min-width: 0; display: flex; flex-direction: column; background: #fff; }
.listbar { display: flex; justify-content: flex-end; height: 39px; flex: none; background: #e6e8ea; }
.listbar button { gap: 9px; padding: 0 10px; }
.listbar .lit { background: #eeeff1; gap: 10px; padding: 0 8px 0 10px; }
.listbar button:last-child { padding: 0 8px; }
table { width: 100%; table-layout: fixed; border-collapse: collapse; }
.c-out { width: 593px; }
.c-src { width: 66px; }
.c-dst { width: 66px; }
.c-bytes { width: 80px; }
.c-packets { width: 80px; }
th { height: 36px; padding: 0 10px; border: 1px solid #cdd1d4; border-left: 0; background: #e6e8ea; font-weight: 500; text-align: left; white-space: nowrap; }
th.end { text-align: right; padding-right: 3px; }
th.end svg { margin-left: auto; }
td { height: 53px; padding: 28px 9px 0; border-right: 1px solid #dfe1e3; text-align: right; }
td:last-child, th:last-child { border-right: 0; }
.foot { flex: 1; margin-top: 15px; border-top: 1px solid #cdd1d4; }

.front footer { display: flex; justify-content: flex-end; gap: 9px; flex: none; height: 43px; padding: 6px 9px 0; border-top: 1px solid #cdd1d4; }
.front footer button { width: 96px; height: 30px; justify-content: center; border-radius: 8px; background: #d1d3d5; font-weight: 600; }
.front footer .go { background: #1292f2; color: #fff; }

.status { flex: none; height: 84px; padding: 4px 0 0 19px; border: solid #a6abb4; border-width: 1px 0 0 1px; background: #eeeff1; }
.stats { display: flex; height: 37px; }
.stats p { display: flex; align-items: center; white-space: nowrap; }
.stats b { font-weight: 500; margin: 0 9px; }
.s-name { width: 578px; }
.s-cpu { width: 146px; }
.s-mem { width: 539px; }
.s-cpu b, .s-mem b, .s-date b, .s-up b { margin: 0 14px 0 10px; }

.taskbar { display: grid; grid-template-columns: 1fr auto 1fr; align-items: center; height: 71px; flex: none; padding-bottom: 2px; border-top: 2px solid #3b3b3d; background: #1c1c1c; color: #fff; font-family: "Open Sans", "Noto Sans", sans-serif; }
.widget { display: flex; align-items: center; gap: 9px; padding-left: 29px; color: inherit; text-decoration: none; }
.stock { position: relative; }
.badge { position: absolute; width: 24px; height: 24px; border-radius: 12px; text-align: center; font-size: 16px; line-height: 24px; font-weight: 400; color: #111; }
.pink { right: -2px; top: -11px; background: #ff9aa5; }
.quote { display: flex; flex-direction: column; font-size: 17px; line-height: 24px; }
.quote em { font-style: normal; color: #ff8f9d; }
.apps { display: flex; gap: 6px; }
.apps button { position: relative; width: 60px; height: 60px; justify-content: center; border-radius: 6px; }
.sky { left: 31px; top: 4px; background: #4cc2ff; }
.slate { left: 31px; top: 4px; background: #73858f; color: #dfe5e8; }
.run::after, .live::after { content: ""; position: absolute; left: 26px; bottom: 0; width: 9px; height: 5px; border-radius: 3px; background: #9a9a9a; }
.live { background: #2a2a2a; border: 1px solid #383838; }
.live::after { left: 17px; width: 24px; background: #4cc2ff; }
.tray { display: flex; align-items: center; justify-content: flex-end; padding-right: 28px; font-size: 17px; line-height: 24px; }
.lang { margin: 0 27px 0 32px; text-align: center; }
.signals { display: flex; gap: 12px; margin-right: 25px; }
.time { text-align: right; }
</style>
